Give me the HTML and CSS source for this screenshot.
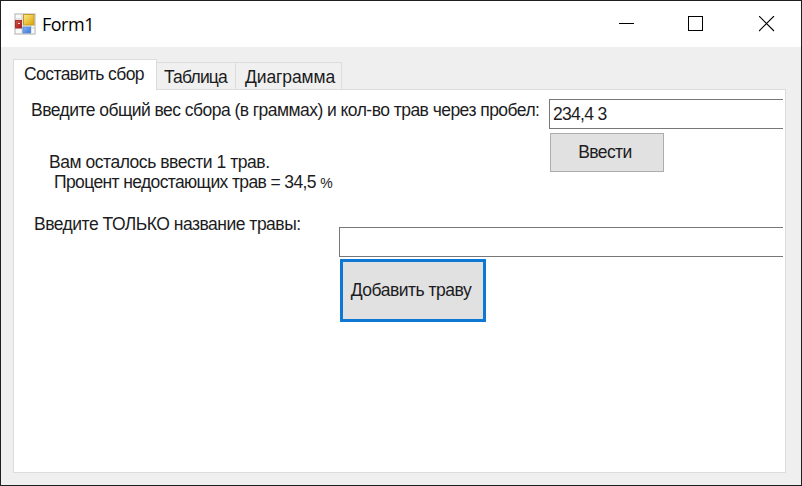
FILE: index.html
```html
<!DOCTYPE html>
<html lang="ru">
<head>
<meta charset="utf-8">
<title>Form1</title>
<link rel="stylesheet" href="styles.css">
</head>
<body>
<div class="window">
  <header class="titlebar">
    <svg class="app-icon" width="22" height="22" viewBox="0 0 22 22">
      <defs>
        <linearGradient id="gold" x1="0" y1="0" x2="1" y2="1"><stop offset="0" stop-color="#ffe88a"/><stop offset="1" stop-color="#dba400"/></linearGradient>
        <linearGradient id="red" x1="0" y1="0" x2="1" y2="1"><stop offset="0" stop-color="#d9524a"/><stop offset="1" stop-color="#a31818"/></linearGradient>
        <linearGradient id="blue" x1="0" y1="0" x2="1" y2="1"><stop offset="0" stop-color="#86b8f8"/><stop offset="1" stop-color="#3a74d4"/></linearGradient>
      </defs>
      <rect x="1" y="1" width="20" height="20" fill="#fafafa" stroke="#c6c6c6" stroke-width="1.4"/>
      <path d="M8 1V21M1 6H9M1 15H21M17 12V21" stroke="#cfcfcf" fill="none"/>
      <rect x="9.5" y="1.5" width="10.5" height="10.5" fill="url(#gold)" stroke="#c39a28"/>
      <rect x="1.5" y="7.5" width="6" height="7.500" fill="url(#red)" stroke="#a93030"/>
      <path d="M4 10.500h2" stroke="#ffd8d0"/>
      <rect x="9" y="14" width="7.500" height="6" fill="url(#blue)" stroke="#5a8bd4"/>
    </svg>
    <h1 class="title">Form1</h1>
    <div class="controls">
      <svg width="16" height="16" viewBox="0 0 16 16"><path d="M0 7.500H15" stroke="#000"/></svg>
      <svg width="16" height="16" viewBox="0 0 16 16"><rect x=".5" y=".5" width="14" height="14" fill="none" stroke="#000"/></svg>
      <svg width="16" height="16" viewBox="0 0 16 16"><path d="M0 0L15 15M15 0L0 15" stroke="#000" stroke-width="1.100"/></svg>
    </div>
  </header>
  <main class="client">
    <nav class="tabs">
      <div class="tab active"><span class="t-compose">Составить сбор</span></div>
      <div class="tab"><span class="t-table">Таблица</span></div>
      <div class="tab"><span class="t-chart">Диаграмма</span></div>
    </nav>
    <section class="page">
      <div class="row total">
        <span class="label l-total">Введите общий вес сбора (в граммах) и кол-во трав через пробел:</span>
        <div class="input"><span class="value">234,4 3</span></div>
      </div>
      <div class="row middle">
        <div class="status">
          <div class="s-left">Вам осталось ввести 1 трав.</div>
          <div class="s-percent">Процент недостающих трав = 34,5 <span class="sign">%</span></div>
        </div>
        <button class="button enter"><span class="b-enter">Ввести</span></button>
      </div>
      <div class="row herb">
        <span class="label l-herb">Введите ТОЛЬКО название травы:</span>
        <div class="input"></div>
      </div>
      <button class="button add"><span class="b-add">Добавить траву</span></button>
    </section>
  </main>
</div>
</body>
</html>
```
FILE: styles.css
```css
* { box-sizing: border-box; }
body { margin: 0; }
.window {
  width: 802px; height: 486px;
  display: flex; flex-direction: column;
  border: 1px solid #1f1f23;
  background: #efefef;
  color: #1c1c22;
  font: 17.500px/20px "Liberation Sans", Arial, sans-serif;
  letter-spacing: -.6px;
  white-space: nowrap;
}
.titlebar { height: 46px; display: flex; align-items: center; background: #fff; padding: 0 26px 0 13px; }
.app-icon { margin-top: -1px; }
.title { margin: 0 0 0 6px; font: 18px/24px "Open Sans", "Noto Sans", sans-serif; color: #000; letter-spacing: -.5px; }
.controls { margin-left: auto; display: flex; gap: 54px; }
.controls svg { display: block; }
.controls svg:nth-child(2) { margin: 0 1px 0 -1px; }
.client { flex: 1; display: flex; flex-direction: column; padding: 12px 15px 12px 12px; }
.tabs { display: flex; align-items: flex-end; height: 31px; margin-bottom: -1px; position: relative; }
.tab { height: 28px; border: 1px solid #dcdcdc; border-left: 0; background: #f0f0f0; padding: 4px 0 0 7px; width: 79px; }
.tab:last-child { width: 106px; padding-left: 9px; }
.tab.active { width: 144px; height: 31px; background: #fff; border-left: 1px solid #dcdcdc; border-bottom: 0; padding: 4px 0 0 10px; }
.page { flex: 1; background: #fff; border: 1px solid #dcdcdc; padding: 9px 2px 0 0; }
.row { display: flex; justify-content: space-between; }
.label { display: block; }
.input { height: 30px; border: 1px solid #777; border-right: 0; padding: 4px 0 0 3px; }
.total { padding-left: 17px; }
.total .input { width: 234px; }
.l-total { margin-top: 1px; }
.middle { padding: 4px 119px 0 35px; height: 98px; }
.status { padding-top: 19px; }
.s-percent { padding-left: 5px; }
.button { display: flex; align-items: center; justify-content: center; padding: 0; border: 1px solid #adadad; background: #e1e1e1; color: inherit; font: inherit; letter-spacing: inherit; }
.enter { width: 114px; height: 39px; }
.enter span { margin: 0 4px 1px 0; }
.herb { padding-left: 20px; }
.herb .input { width: 444px; }
.l-herb { margin-top: -13px; letter-spacing: -.5px; }
.add { width: 146px; height: 63px; margin: 2px 0 0 326px; border: 3px solid #0f78d4; }
.add span { margin: 0 4px 1px 0; letter-spacing: -.5px; }
.t-compose { letter-spacing: -.57px; }
.t-table { letter-spacing: -.8px; }
.t-chart { letter-spacing: -.1px; }
.l-total { letter-spacing: -.54px; }
.value { letter-spacing: -.7px; }
.s-left { letter-spacing: -.46px; }
.s-percent { letter-spacing: -.62px; }
.sign { font-size: 14px; }
```
